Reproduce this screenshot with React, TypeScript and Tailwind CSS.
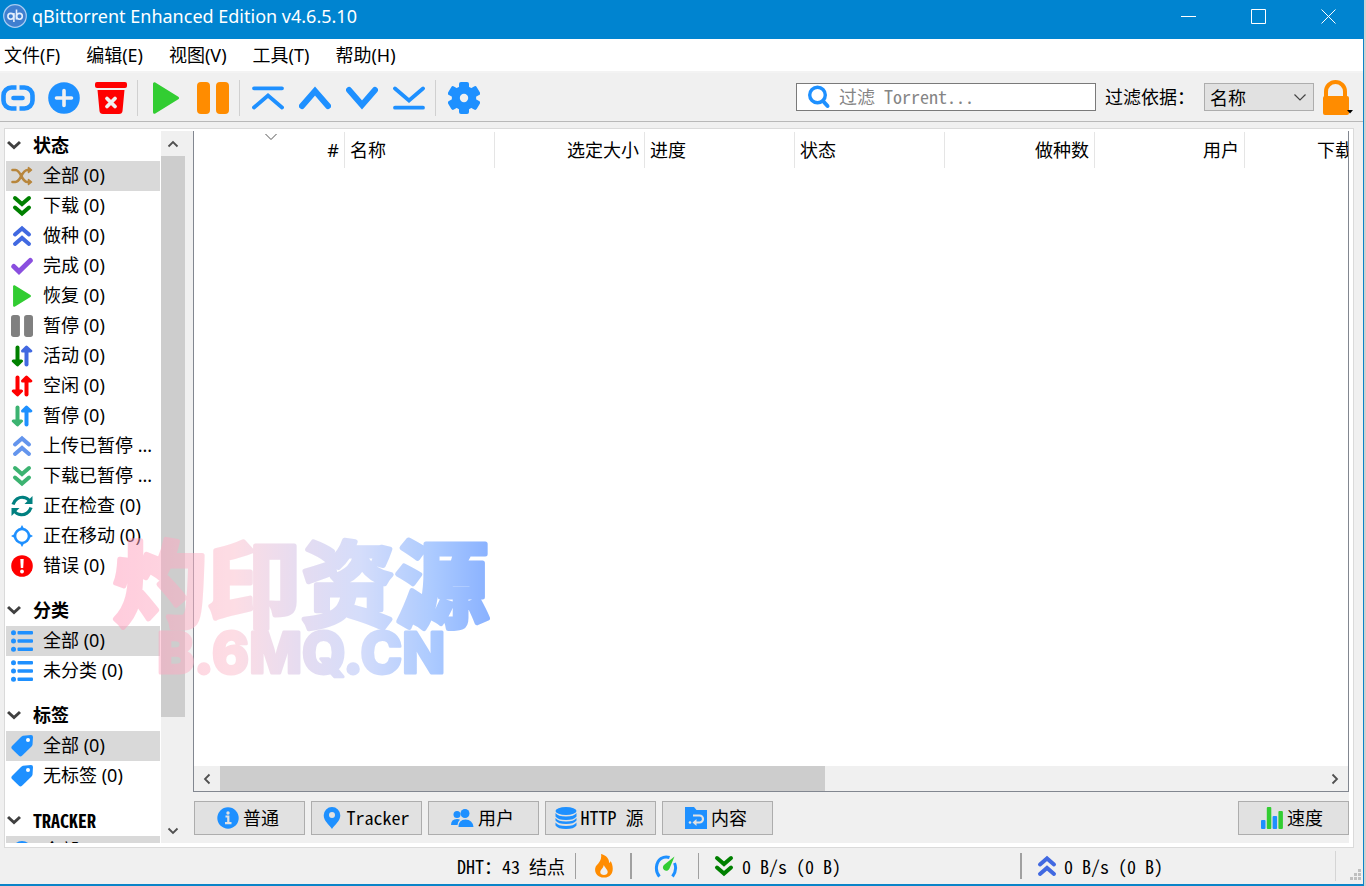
import type { ReactNode } from 'react';

const UI = 'font-["Noto_Sans","Noto_Sans_CJK_SC",sans-serif]';
const MONO = 'font-["Noto_Sans_Mono_CJK_SC","Noto_Sans_CJK_SC",monospace]';

type IconProps = { className?: string };

/* ---------- shared glyphs ---------- */

function Chevrons({ className = '', up = false }: IconProps & { up?: boolean }) {
  return (
    <svg viewBox="0 0 22 22" className={className} fill="none" stroke="currentColor" strokeWidth="4" strokeLinecap="round" strokeLinejoin="miter">
      {up ? (
        <path d="M4 9.5 11 3.5 18 9.5M4 19 11 13 18 19" />
      ) : (
        <path d="M4 3 11 9 18 3M4 12.5 11 18.5 18 12.5" />
      )}
    </svg>
  );
}

function UpDown({ down, up }: { down: string; up: string }) {
  return (
    <svg viewBox="0 0 22 22" className="size-[22px]" fill="none" strokeWidth="4" strokeLinecap="round" strokeLinejoin="round">
      <path d="M6.5 2.5V17" className={down} />
      <path d="M2.2 16 6.5 20 10.5 16Z" strokeWidth="3" className={`${down} fill-current`} />
      <path d="M15.5 19.5V5" className={up} />
      <path d="M11.5 6 15.5 2 19.8 6Z" strokeWidth="3" className={`${up} fill-current`} />
    </svg>
  );
}

function Shuffle() {
  return (
    <svg viewBox="0 0 22 22" className="size-[22px] text-[#b8863c]" fill="none" stroke="currentColor" strokeWidth="2.6" strokeLinecap="round" strokeLinejoin="round">
      <path d="M1.5 5H4.5C10 5 10.5 17 16.5 17H19M1.5 17H4.5C10 17 10.5 5 16.5 5H19" />
      <path d="M17.5 2.5 20.5 5 17.5 7.5ZM17.5 14.5 20.5 17 17.5 19.5Z" fill="currentColor" strokeWidth="1.5" />
    </svg>
  );
}

function Check() {
  return (
    <svg viewBox="0 0 22 22" className="size-[22px] text-[#8a4fdf]" fill="none" stroke="currentColor" strokeWidth="5" strokeLinecap="round">
      <path d="M2.8 11.5 8 16.5 19.3 5.5" />
    </svg>
  );
}

function Play({ className = '' }: IconProps) {
  return (
    <svg viewBox="0 0 32 32" className={className} fill="#32cd32" stroke="#32cd32" strokeWidth="3" strokeLinejoin="round">
      <path d="M4.5 1.8V30.2L27.5 16Z" />
    </svg>
  );
}

function Pause({ className = '' }: IconProps) {
  return (
    <svg viewBox="0 0 32 32" className={className} fill="currentColor">
      <rect x="0" y="0" width="13" height="32" rx="4" />
      <rect x="19" y="0" width="13" height="32" rx="4" />
    </svg>
  );
}

function Refresh() {
  return (
    <svg viewBox="0 0 22 22" className="size-[22px] text-[#008080]" fill="none" stroke="currentColor" strokeWidth="3.2">
      <path d="M2 9.5C3.5 4.5 8 2 12 2.3C15 2.5 17.5 4 19 6.5M20 12.5C18.5 17.5 14 20 10 19.7C7 19.5 4.5 18 3 15.5" />
      <path d="M21.5 1V9H13.5ZM.5 21V13H8.5Z" fill="currentColor" stroke="none" />
    </svg>
  );
}

function Moving() {
  return (
    <svg viewBox="0 0 22 22" className="size-[22px] text-[#1e90ff]">
      <circle cx="11" cy="11" r="7" fill="none" stroke="currentColor" strokeWidth="2.6" />
      <path d="M11 0 13.5 4.5H8.5ZM11 22 13.5 17.5H8.5ZM0 11 4.5 8.5V13.5ZM22 11 17.5 8.5V13.5Z" fill="currentColor" />
    </svg>
  );
}

function ErrorMark() {
  return (
    <svg viewBox="0 0 22 22" className="size-[22px]">
      <circle cx="11" cy="11" r="10.8" fill="#f00" />
      <path d="M9.3 4H12.7L12.2 13H9.8Z" fill="#fff" />
      <circle cx="11" cy="16.5" r="1.9" fill="#fff" />
    </svg>
  );
}

function ListIcon() {
  return (
    <svg viewBox="0 0 22 22" className="size-[22px]" fill="#1e90ff">
      <circle cx="2.5" cy="2.7" r="2.5" />
      <circle cx="2.5" cy="11" r="2.5" />
      <circle cx="2.5" cy="19.3" r="2.5" />
      <rect x="6.5" y="1" width="15.5" height="3.4" rx="1" />
      <rect x="6.5" y="9.3" width="15.5" height="3.4" rx="1" />
      <rect x="6.5" y="17.6" width="15.5" height="3.4" rx="1" />
    </svg>
  );
}

function Tag() {
  return (
    <svg viewBox="0 0 22 22" className="size-[22px]">
      <path d="M12 .8 20 0Q22 0 22 2L21.5 9.5Q21.4 10.5 20.5 11.5L11 20.8Q9.5 22 8 20.8L1 14Q-.3 12.5 1 11L10 2Q11 1 12 .8Z" fill="#1e90ff" />
      <circle cx="17" cy="5" r="2" fill="#fff" />
    </svg>
  );
}

function Angle({ dir, className = '' }: { dir: 'up' | 'down' | 'left' | 'right'; className?: string }) {
  const d = {
    up: 'M2.5 9.5 7 5 11.5 9.5',
    down: 'M2.5 4.5 7 9 11.5 4.5',
    left: 'M9.5 2.5 5 7 9.5 11.5',
    right: 'M4.5 2.5 9 7 4.5 11.5',
  }[dir];
  return (
    <svg viewBox="0 0 14 14" className={`size-[14px] ${className}`} fill="none" stroke="currentColor" strokeWidth="1.8">
      <path d={d} />
    </svg>
  );
}

/* ---------- toolbar ---------- */

function ToolButton({ label, children }: { label: string; children: ReactNode }) {
  return (
    <button type="button" aria-label={label} className="flex size-8 shrink-0 items-center justify-center">
      {children}
    </button>
  );
}

function ToolSeparator() {
  return <div className="mr-3 ml-[10px] h-9 w-px shrink-0 bg-[#d0d0d0]" />;
}

function Toolbar() {
  return (
    <div className="flex h-[49px] shrink-0 items-center border-b border-[#b8b8b8] bg-[#f0f0f0] pt-px pr-[13px] pl-px text-[#1e90ff]">
      <div className="flex gap-[15px]">
        <ToolButton label="添加链接">
          <svg viewBox="-1 0 34 26" className="h-[26px] w-[34px] shrink-0 overflow-visible" fill="none" stroke="currentColor" strokeWidth="4.6">
            <path d="M15.5 2.5H10.5a8 8 0 0 0-8 8v5a8 8 0 0 0 8 8h5M18.5 2.5h5a8 8 0 0 1 8 8v5a8 8 0 0 1-8 8h-5" />
            <path d="M12.5 13H21.5" strokeLinecap="round" />
          </svg>
        </ToolButton>
        <ToolButton label="添加文件">
          <svg viewBox="0 0 32 32" className="size-8">
            <circle cx="16" cy="16" r="15.8" fill="currentColor" />
            <path d="M16 8.5V23.5M8.5 16H23.5" stroke="#f0f0f0" strokeWidth="3.6" strokeLinecap="round" />
          </svg>
        </ToolButton>
        <ToolButton label="删除">
          <svg viewBox="0 0 32 32" className="size-8">
            <rect x="0" y="0" width="32" height="6" rx="2" fill="#f00" />
            <path d="M2.5 8H29.5L27.5 29Q27.2 32 24 32H8Q4.8 32 4.5 29Z" fill="#f00" />
            <path d="M12 16.5 20 24.5M20 16.5 12 24.5" stroke="#f0f0f0" strokeWidth="3.8" strokeLinecap="round" />
          </svg>
        </ToolButton>
      </div>
      <ToolSeparator />
      <div className="flex gap-[15px]">
        <ToolButton label="恢复"><Play className="size-8" /></ToolButton>
        <ToolButton label="暂停"><Pause className="size-8 text-[#ff8c00]" /></ToolButton>
      </div>
      <ToolSeparator />
      <div className="flex gap-[15px]">
        <ToolButton label="移到顶部">
          <svg viewBox="0 0 32 32" className="size-8" fill="none" stroke="currentColor" strokeWidth="3.8" strokeLinecap="round">
            <path d="M2 6.3H30M2 25.5 16 13.5 30 25.5" />
          </svg>
        </ToolButton>
        <ToolButton label="上移">
          <svg viewBox="0 0 32 32" className="size-8" fill="none" stroke="currentColor" strokeWidth="6" strokeLinecap="round">
            <path d="M3 24 16 9 29 24" />
          </svg>
        </ToolButton>
        <ToolButton label="下移">
          <svg viewBox="0 0 32 32" className="size-8" fill="none" stroke="currentColor" strokeWidth="6" strokeLinecap="round">
            <path d="M3 8 16 23 29 8" />
          </svg>
        </ToolButton>
        <ToolButton label="移到底部">
          <svg viewBox="0 0 32 32" className="size-8" fill="none" stroke="currentColor" strokeWidth="3.8" strokeLinecap="round">
            <path d="M2 25.7H30M2 6.5 16 18.5 30 6.5" />
          </svg>
        </ToolButton>
      </div>
      <ToolSeparator />
      <ToolButton label="选项">
        <svg viewBox="0 0 32 32" className="size-8" fill="currentColor">
          <circle cx="16" cy="16" r="12.2" />
          <rect x="11" y="0" width="10" height="32" rx="2" />
          <rect x="11" y="-.5" width="10" height="33" rx="2" transform="rotate(60 16 16)" />
          <rect x="11" y="-.5" width="10" height="33" rx="2" transform="rotate(120 16 16)" />
          <circle cx="16" cy="16" r="4.2" fill="#f0f0f0" />
        </svg>
      </ToolButton>
      <div className={`ml-auto flex items-center text-[18px] text-black ${MONO}`}>
        <label className="mb-[2px] flex h-7 w-[300px] items-center gap-2 border border-[#7a7a7a] bg-white pl-[10px]">
          <svg viewBox="0 0 24 24" className="size-6 shrink-0" fill="none" stroke="#1e90ff" strokeWidth="3.4" strokeLinecap="round">
            <circle cx="10.5" cy="10" r="7.8" />
            <path d="M16 16 20.5 21" strokeWidth="4" />
          </svg>
          <input aria-label="过滤 Torrent" placeholder="过滤 Torrent..." className="min-w-0 flex-1 bg-transparent outline-none placeholder:text-[#858585]" />
        </label>
        <label htmlFor="filter-by" className="mb-[2px] ml-[9px] w-[99px] whitespace-nowrap">过滤依据：</label>
        <div className="relative mb-[2px]">
          <select id="filter-by" className="block h-7 w-[110px] appearance-none border border-[#adadad] bg-[#e1e1e1] pl-[5px] leading-6">
            <option>名称</option>
          </select>
          <svg viewBox="0 0 14 14" className="pointer-events-none absolute top-[7px] right-[7px] size-[14px]" fill="none" stroke="#444" strokeWidth="1.2">
            <path d="M1.5 4.5 7 10 12.5 4.5" />
          </svg>
        </div>
        <button type="button" aria-label="锁定" className="ml-2 h-9 w-[28px]">
          <svg viewBox="0 0 28 36" className="h-9 w-[28px] overflow-visible">
            <path d="M4 17V11.5a9.5 9.5 0 0 1 19 0v5.5" fill="none" stroke="#ff8c00" strokeWidth="4" />
            <rect x="1" y="16" width="26" height="19" rx="2" fill="#ff8c00" />
            <path d="M25 30H31L28 33.5Z" fill="#000" />
          </svg>
        </button>
      </div>
    </div>
  );
}

/* ---------- sidebar ---------- */

type Row = { icon: ReactNode; text: string; active?: boolean };

const STATUS: Row[] = [
  { icon: <Shuffle />, text: '全部 (0)', active: true },
  { icon: <Chevrons className="size-[22px] text-[#008000]" />, text: '下载 (0)' },
  { icon: <Chevrons up className="size-[22px] text-[#4169e1]" />, text: '做种 (0)' },
  { icon: <Check />, text: '完成 (0)' },
  { icon: <Play className="size-[22px]" />, text: '恢复 (0)' },
  { icon: <Pause className="size-[22px] text-[#808080]" />, text: '暂停 (0)' },
  { icon: <UpDown down="stroke-[#008000] text-[#008000]" up="stroke-[#4169e1] text-[#4169e1]" />, text: '活动 (0)' },
  { icon: <UpDown down="stroke-[#ff0000] text-[#ff0000]" up="stroke-[#ff0000] text-[#ff0000]" />, text: '空闲 (0)' },
  { icon: <UpDown down="stroke-[#3cb371] text-[#3cb371]" up="stroke-[#1e90ff] text-[#1e90ff]" />, text: '暂停 (0)' },
  { icon: <Chevrons up className="size-[22px] text-[#6495ed]" />, text: '上传已暂停 ...' },
  { icon: <Chevrons className="size-[22px] text-[#3cb371]" />, text: '下载已暂停 ...' },
  { icon: <Refresh />, text: '正在检查 (0)' },
  { icon: <Moving />, text: '正在移动 (0)' },
  { icon: <ErrorMark />, text: '错误 (0)' },
];

const CATEGORIES: Row[] = [
  { icon: <ListIcon />, text: '全部 (0)', active: true },
  { icon: <ListIcon />, text: '未分类 (0)' },
];

const TAGS: Row[] = [
  { icon: <Tag />, text: '全部 (0)', active: true },
  { icon: <Tag />, text: '无标签 (0)' },
];

const TRACKERS: Row[] = [
  {
    icon: (
      <svg viewBox="0 0 22 22" className="size-[22px]">
        <circle cx="11" cy="11" r="10" fill="#1e90ff" />
      </svg>
    ),
    text: '全部 (0)',
    active: true,
  },
];

function Section({ title, rows, mono = false }: { title: string; rows: Row[]; mono?: boolean }) {
  return (
    <section className="mb-[15px]">
      <button type="button" className={`flex h-[30px] w-full items-center gap-3 pb-[2px] pl-px font-bold ${mono ? MONO : ''}`}>
        <svg viewBox="0 0 14 14" className="size-[14px] text-[#404040]" fill="none" stroke="currentColor" strokeWidth="3">
          <path d="M1 4 7 9.5 13 4" />
        </svg>
        {title}
      </button>
      <ul>
        {rows.map((r) => (
          <li key={r.text + title} className={`flex h-[30px] items-center gap-[10px] pl-[5px] whitespace-nowrap ${r.active ? 'bg-[#d9d9d9]' : ''}`}>
            {r.icon}
            <span className="pb-[2px]">{r.text}</span>
          </li>
        ))}
      </ul>
    </section>
  );
}

function Sidebar() {
  return (
    <aside className="flex min-h-0 w-[179px] shrink-0 text-[18px]">
      <nav className="mr-px min-w-0 flex-1 overflow-hidden">
        <Section title="状态" rows={STATUS} />
        <Section title="分类" rows={CATEGORIES} />
        <Section title="标签" rows={TAGS} />
        <Section title="TRACKER" rows={TRACKERS} mono />
      </nav>
      <div className="flex w-6 flex-col bg-[#f0f0f0] text-[#505050]">
        <button type="button" aria-label="向上滚动" className="flex h-[25px] shrink-0 items-center justify-center"><Angle dir="up" /></button>
        <div className="flex-[561] bg-[#cdcdcd]" />
        <div className="flex-[101]" />
        <button type="button" aria-label="向下滚动" className="flex h-[25px] shrink-0 items-center justify-center"><Angle dir="down" /></button>
      </div>
    </aside>
  );
}

/* ---------- transfer list ---------- */

const COLUMNS = [
  { name: '#', right: true },
  { name: '名称', right: false },
  { name: '选定大小', right: true },
  { name: '进度', right: false },
  { name: '状态', right: false },
  { name: '做种数', right: true },
  { name: '用户', right: true },
  { name: '下载速度', right: true },
];

function TransferList() {
  return (
    <div className="flex min-h-0 flex-1 flex-col border-r border-b border-l border-[#828790] bg-white">
      <div className="min-h-0 flex-1 overflow-hidden">
        <table className="w-[1201px] table-fixed border-collapse text-[18px]">
          <thead>
            <tr>
              {COLUMNS.map((c, i) => (
                <th key={c.name} scope="col" className={`relative p-0 pt-px font-normal ${i === 0 ? 'w-[151px]' : 'w-[150px]'}`}>
                  <div className={`h-9 border-r border-[#e5e5e5] px-[5px] leading-9 ${c.right ? 'text-right' : 'text-left'}`}>{c.name}</div>
                  {i === 0 && (
                    <svg viewBox="0 0 12 8" className="absolute top-[2px] left-[71px] h-2 w-3" fill="none" stroke="#555">
                      <path d="M.5 1 6 6.5 11.5 1" />
                    </svg>
                  )}
                </th>
              ))}
            </tr>
          </thead>
        </table>
      </div>
      <div className="flex h-[25px] shrink-0 bg-[#f0f0f0] text-[#505050]">
        <button type="button" aria-label="向左滚动" className="flex w-[26px] items-center justify-center"><Angle dir="left" /></button>
        <div className="flex-[605] bg-[#cdcdcd]" />
        <div className="flex-[497]" />
        <button type="button" aria-label="向右滚动" className="flex w-[26px] items-center justify-center"><Angle dir="right" /></button>
      </div>
    </div>
  );
}

function TabButton({ icon, children }: { icon: ReactNode; children: ReactNode }) {
  return (
    <button type="button" className={`flex h-[34px] w-[111px] items-center justify-center gap-1 border border-[#adadad] bg-[#e1e1e1] pr-[3px] text-[18px] whitespace-nowrap ${MONO}`}>
      {icon}
      <span className="pb-[2px]">{children}</span>
    </button>
  );
}

function BottomTabs() {
  return (
    <div className="flex shrink-0 gap-[6px] pt-[9px] pb-2 pl-px">
      <TabButton
        icon={
          <svg viewBox="0 0 22 22" className="size-[22px] shrink-0">
            <circle cx="11" cy="11" r="10.7" fill="#1e90ff" />
            <circle cx="11" cy="6" r="1.7" fill="#e1e1e1" />
            <path d="M8.5 9.5H11.3V16M8 16.2H14.5" fill="none" stroke="#e1e1e1" strokeWidth="2.2" />
          </svg>
        }
      >
        普通
      </TabButton>
      <TabButton
        icon={
          <svg viewBox="0 0 22 22" className="size-[22px] shrink-0">
            <path d="M11 0a8.3 8.3 0 0 1 8.3 8.3C19.3 14 14 17.5 11 22C8 17.5 2.7 14 2.7 8.3A8.3 8.3 0 0 1 11 0Z" fill="#1e90ff" />
            <circle cx="11" cy="8" r="3" fill="#e1e1e1" />
          </svg>
        }
      >
        Tracker
      </TabButton>
      <TabButton
        icon={
          <svg viewBox="0 0 24 22" className="h-[22px] w-6 shrink-0" fill="#1e90ff">
            <circle cx="7" cy="7.5" r="3.5" />
            <path d="M1 18Q1 12 7 12Q9 12 10 12.8Q7.5 15 7.5 18Z" />
            <circle cx="15" cy="6.5" r="4.5" />
            <path d="M8.5 20Q8.5 12.5 15.5 12.5T23.5 20Z" />
          </svg>
        }
      >
        用户
      </TabButton>
      <TabButton
        icon={
          <svg viewBox="0 0 22 22" className="size-[22px] shrink-0">
            <ellipse cx="11" cy="4" rx="10.5" ry="4" fill="#1e90ff" />
            <path d="M.5 6Q3 9.5 11 9.5T21.5 6V9.5Q19 13 11 13T.5 9.5ZM.5 11Q3 14.5 11 14.5T21.5 11V13.5Q19 17 11 17T.5 13.5ZM.5 15.5Q3 19 11 19T21.5 15.5V18.5Q19 22 11 22T.5 18.5Z" fill="#1e90ff" />
          </svg>
        }
      >
        HTTP 源
      </TabButton>
      <TabButton
        icon={
          <svg viewBox="0 0 22 22" className="size-[22px] shrink-0">
            <path d="M0 0H9L11.5 3H22V22H0Z" fill="#1e90ff" />
            <path d="M8 8.5H14.5a3.5 3.5 0 0 1 0 7H10" fill="none" stroke="#e1e1e1" strokeWidth="2.2" />
            <path d="M11.5 12V19L7.5 15.5Z" fill="#e1e1e1" />
            <circle cx="5" cy="15.5" r="1.3" fill="#e1e1e1" />
          </svg>
        }
      >
        内容
      </TabButton>
      <div className="ml-auto">
        <TabButton
          icon={
            <svg viewBox="0 0 22 22" className="size-[22px] shrink-0">
              <rect x="0" y="13" width="4.5" height="9" rx="1" fill="#1e90ff" />
              <rect x="5.8" y="0" width="4.5" height="22" rx="1" fill="#32cd32" />
              <rect x="11.6" y="9" width="4.5" height="13" rx="1" fill="#1e90ff" />
              <rect x="17.4" y="4" width="4.5" height="18" rx="1" fill="#32cd32" />
            </svg>
          }
        >
          速度
        </TabButton>
      </div>
    </div>
  );
}

/* ---------- status bar ---------- */

function StatusBar() {
  return (
    <footer className={`flex h-9 shrink-0 items-center justify-end bg-[#f0f0f0] text-[18px] whitespace-nowrap ${MONO}`}>
      <span className="pr-[10px]">DHT：43 结点</span>
      <div className="flex h-[26px] w-[55px] items-center justify-center border-l border-[#a0a0a0] pl-px">
        <svg viewBox="0 0 20 24" className="h-6 w-5">
          <path d="M7 0C12 1 15.5 5 15 9Q16.5 8.5 16.5 7C20 12 20.5 23.5 10 23.5C1 23.5-.5 15 2.5 11.5C5.5 8 8 5 7 0ZM9.8 11C9 15 6.3 15.5 6.3 18.3C6.3 20 8 21 10 21C12 21 13.7 20 13.7 18C13.7 15.5 11 14 9.8 11Z" fill="#ff8c00" fillRule="evenodd" />
        </svg>
      </div>
      <div className="flex h-[26px] w-[68px] items-center justify-center border-l-2 border-[#a0a0a0] pl-[2px]">
        <svg viewBox="0 0 24 24" className="size-6" fill="none">
          <path d="M5.5 22.5C.5 17 2 8 7 4.5Q11 2 15.5 3.5M20.5 9C22.5 13.5 21.5 18.5 18.5 22.5" stroke="#1e90ff" strokeWidth="3" />
          <path d="M20.5 2.5 15.5 14.5A3.4 3.4 0 1 1 10.5 10.5Z" fill="#32cd32" />
        </svg>
      </div>
      <div className="flex h-[26px] w-[322px] items-center gap-[7px] border-l border-[#a0a0a0] pl-[14px]">
        <Chevrons className="size-[22px] text-[#008000]" />
        <span>0 B/s (0 B)</span>
      </div>
      <div className="flex h-[26px] w-[315px] items-center gap-[6px] border-l-2 border-[#a0a0a0] pl-[14px]">
        <Chevrons up className="size-[22px] text-[#4169e1]" />
        <span>0 B/s (0 B)</span>
      </div>
      <div className="flex h-[30px] w-[28px] items-end justify-end border-l border-[#d5d5d5] pr-px">
        <svg viewBox="0 0 12 12" className="size-3" fill="#bfbfbf">
          <path d="M8 0h3v3h-3zM4 4h3v3h-3zM8 4h3v3h-3zM0 8h3v3h-3zM4 8h3v3h-3zM8 8h3v3h-3z" />
        </svg>
      </div>
    </footer>
  );
}

function Watermark() {
  return (
    <svg
      viewBox="0 0 376 150"
      className="pointer-events-none absolute top-[534px] left-[113px] h-[150px] w-[376px] overflow-visible opacity-50"
      fill="url(#brand)"
      stroke="url(#brand)"
      strokeLinejoin="round"
      strokeLinecap="round"
    >
      <defs>
        <linearGradient id="brand" gradientUnits="userSpaceOnUse" x1="0" y1="0" x2="376" y2="0">
          <stop offset="0" stopColor="#ff9bbc" />
          <stop offset=".32" stopColor="#fdbccb" />
          <stop offset=".5" stopColor="#cdbbe4" />
          <stop offset=".66" stopColor="#abbcf8" />
          <stop offset=".85" stopColor="#5b97ff" />
          <stop offset="1" stopColor="#1767ff" />
        </linearGradient>
      </defs>
      <text x="0" y="86" strokeWidth="5" className='font-["Noto_Sans_CJK_SC",sans-serif] text-[94px] font-bold'>灼印资源</text>
      <text x="188" y="139" textAnchor="middle" strokeWidth="3" className="font-[Inter,sans-serif] text-[56px] font-extrabold">B.6MQ.CN</text>
    </svg>
  );
}

/* ---------- window ---------- */

const MENUS = ['文件(F)', '编辑(E)', '视图(V)', '工具(T)', '帮助(H)'];

export default function App() {
  return (
    <div className={`relative flex h-screen overflow-hidden bg-[#d0d0d0] text-black ${UI}`}>
      <div className="flex min-w-0 flex-1 flex-col border-b-2 border-[#0a84c8] bg-[#f0f0f0]">
        <header className="flex h-[39px] shrink-0 items-center bg-[#0084d0] pr-px pl-[3px] text-white">
          <svg viewBox="0 0 24 24" className="mb-[7px] size-6" fill="none">
            <circle cx="12" cy="12" r="11.3" fill="#3f7fd0" stroke="#a9cdf2" strokeWidth="1.2" />
            <g stroke="#e3effc" strokeWidth="1.6">
              <circle cx="7.8" cy="12.3" r="2.9" />
              <path d="M10.9 9V18M13.5 5.5V15.5" />
              <circle cx="16.4" cy="12.3" r="2.9" />
            </g>
          </svg>
          <h1 className="mb-[6px] ml-[5px] flex-1 text-[18px]">qBittorrent Enhanced Edition v4.6.5.10</h1>
          {[
            { label: '最小化', d: 'M0 7.5H15' },
            { label: '最大化', d: 'M.5 .5H14.5V14.5H.5Z' },
            { label: '关闭', d: 'M.5 .5 14.5 14.5M14.5 .5 .5 14.5' },
          ].map((b) => (
            <button key={b.label} type="button" aria-label={b.label} className="mb-[6px] flex w-[70px] items-center justify-center">
              <svg viewBox="0 0 15 15" className="size-[15px]" fill="none" stroke="#fff"><path d={b.d} /></svg>
            </button>
          ))}
        </header>
        <div className="flex min-h-0 flex-1 flex-col border-r border-[#0a84c8]">
          <nav className="flex h-[34px] shrink-0 items-center gap-[26px] border-b-2 border-[#f3f3f3] bg-white pl-1 text-[18px]">
            {MENUS.map((m) => (
              <button key={m} type="button">{m}</button>
            ))}
          </nav>
          <Toolbar />
          <main className="mt-[6px] mr-[9px] ml-1 flex min-h-0 flex-1 border border-[#dadada] bg-white pt-[2px] pr-1 pb-1 pl-px">
            <Sidebar />
            <div className="flex min-w-0 flex-1 flex-col bg-[#f0f0f0] pl-2">
              <TransferList />
              <BottomTabs />
            </div>
          </main>
          <StatusBar />
        </div>
      </div>
      <div className="w-[2px] shrink-0" />
      <Watermark />
    </div>
  );
}
